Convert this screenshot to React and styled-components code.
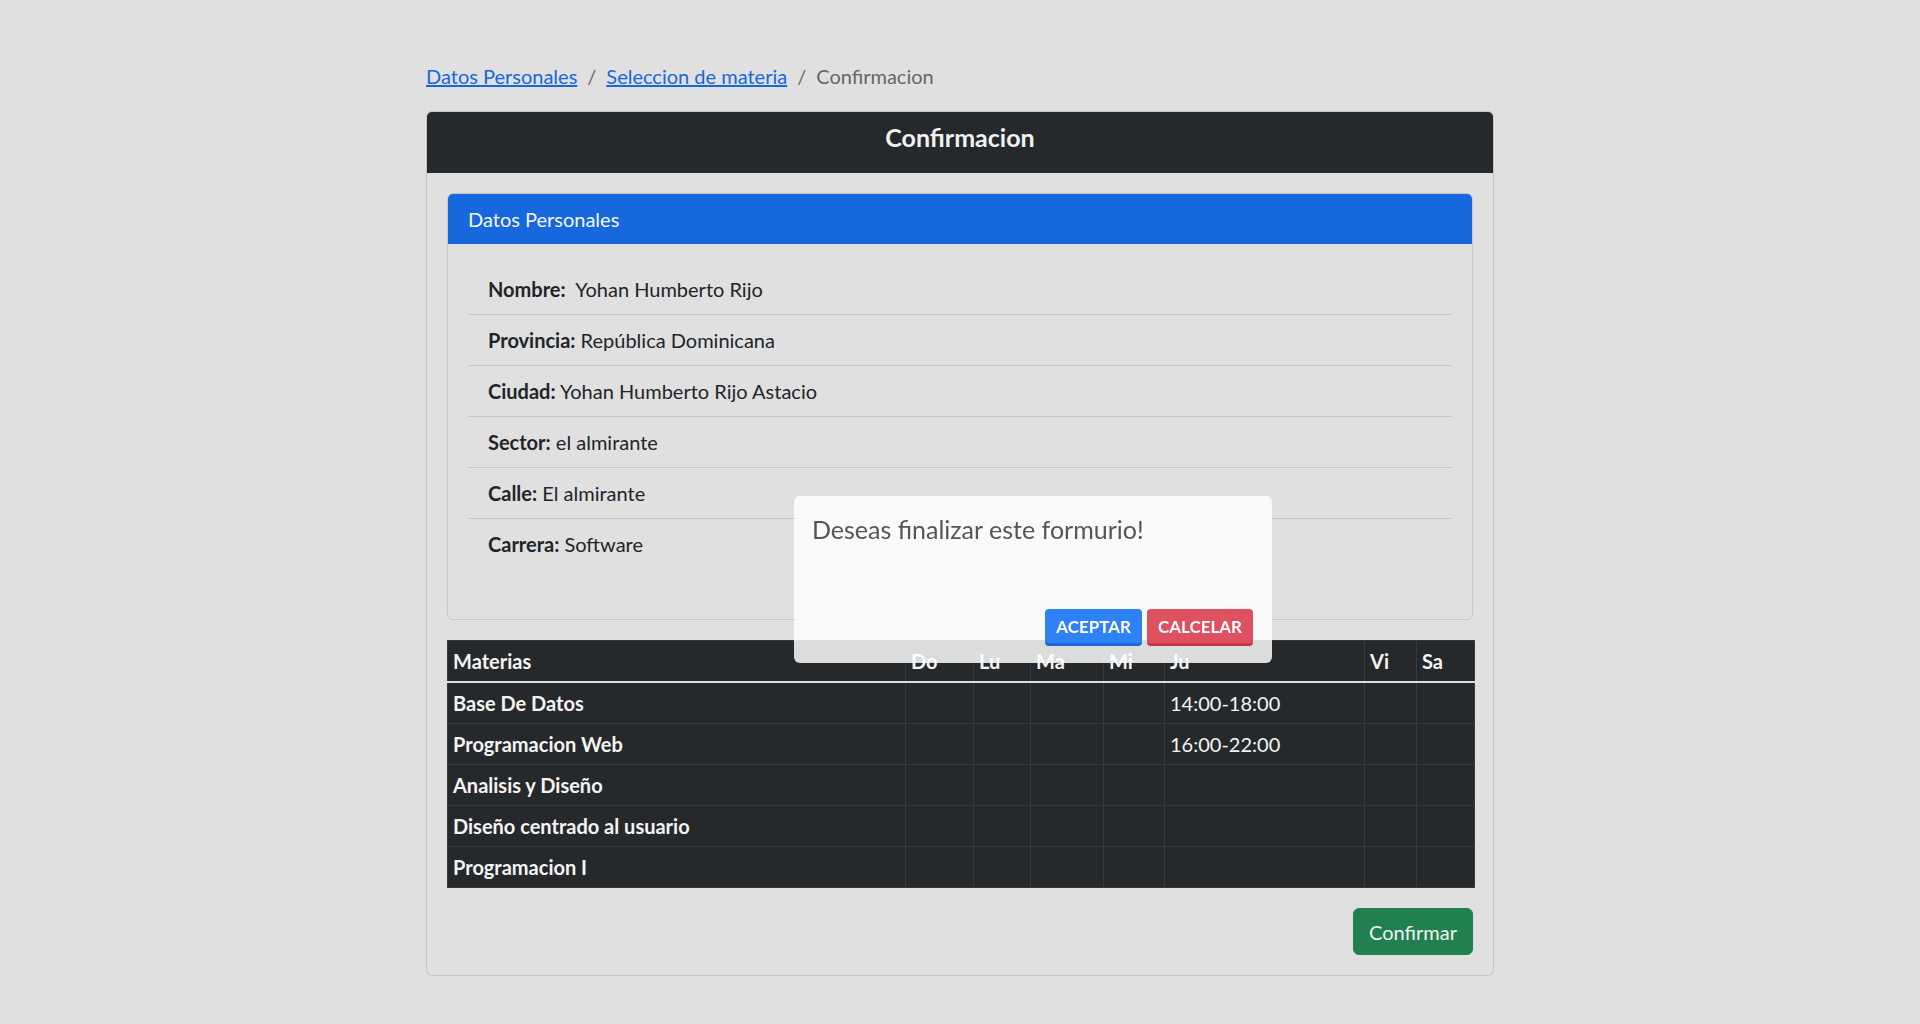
import React from 'react';
import styled, { createGlobalStyle } from 'styled-components';

const GlobalStyle = createGlobalStyle`
  body {
    margin: 0;
    background-color: #e0e0e0;
    font-family: Lato, 'Open Sans', sans-serif;
    color: #212529;
  }
`;

const Page = styled.div`
  width: 1068px;
  margin: 0 auto;
  padding-top: 61px;
  font-size: 20px;
  line-height: 30px;
`;

const Breadcrumb = styled.nav`
  display: flex;
  align-items: center;
  margin-bottom: 20px;
`;

const Crumb = styled.a`
  color: #1767dd;
  text-decoration: underline;
`;

const CrumbActive = styled.span`
  color: #62676c;
`;

const Divider = styled.span`
  color: #62676c;
  padding: 0 10px;
`;

const Card = styled.div`
  border: 1px solid #c6c6c6;
  border-radius: 6px;
  overflow: hidden;
`;

const DarkHeader = styled.div`
  background-color: #26292c;
  color: #f1f1f1;
  text-align: center;
  font-size: 25px;
  font-weight: 700;
  padding: 10px 20px 20px;
  line-height: 30px;
  border-bottom: 1px solid #26292c;
`;

const CardBody = styled.div`
  padding: 20px;
  display: flex;
  flex-direction: column;
`;

const InnerCard = styled.div`
  border: 1px solid #c6c6c6;
  border-radius: 6px;
  overflow: hidden;
`;

const BlueHeader = styled.div`
  background-color: #1767dd;
  color: #f4f7fc;
  padding: 10px 20px;
`;

const InnerBody = styled.div`
  padding: 20px 20px 50px;
`;

const List = styled.ul`
  list-style: none;
  margin: 0;
  padding: 0;
`;

const Item = styled.li`
  padding: 10px 20px;
  border-bottom: 1px solid #c6c6c6;
  &:last-child {
    border-bottom: none;
  }
`;

const Label = styled.b`
  font-weight: 700;
`;

const Table = styled.table`
  margin-top: 20px;
  margin-bottom: 20px;
  width: 100%;
  border-collapse: collapse;
  table-layout: fixed;
  background-color: #26292c;
  color: #f4f4f4;
`;

const Col = styled.col`
  width: ${(p) => p.w}px;
`;

const Th = styled.th`
  text-align: left;
  font-weight: 700;
  padding: 5px;
  border: 1px solid #373b3e;
  white-space: nowrap;
`;

const HeadRow = styled.tr`
  th {
    border-bottom: 2px solid #dedede;
  }
`;

const Td = styled.td`
  padding: 5px;
  border: 1px solid #373b3e;
`;

const Footer = styled.div`
  display: flex;
  justify-content: flex-end;
`;

const Button = styled.button`
  font-family: inherit;
  font-size: 20px;
  line-height: 30px;
  padding: 7.5px 15px;
  border: 1px solid #20804f;
  border-radius: 6px;
  background-color: #20804f;
  color: #f4f4f4;
`;

const Dialog = styled.div`
  position: fixed;
  left: 794px;
  top: 496px;
  width: 478px;
  height: 167px;
  box-sizing: border-box;
  padding: 18px 19px 17px 18px;
  border-radius: 6px;
  background-color: rgba(255, 255, 255, 0.84);
  display: flex;
  flex-direction: column;
`;

const DialogText = styled.div`
  font-size: 25px;
  line-height: 31px;
  color: #555;
`;

const DialogActions = styled.div`
  margin-top: auto;
  display: flex;
  justify-content: flex-end;
  gap: 5px;
`;

const DialogButton = styled.button`
  font-family: inherit;
  height: 37px;
  padding: 0 11px;
  font-size: 17px;
  font-weight: 700;
  text-transform: uppercase;
  color: #fff;
  border: none;
  border-radius: 4px;
  background-color: ${(p) => (p.danger ? '#de5161' : '#2f82f6')};
  border-bottom: 3px solid ${(p) => (p.danger ? '#c23a49' : '#1a66d8')};
`;

const personal = [
  ['Nombre:', '\u00a0 Yohan Humberto Rijo'],
  ['Provincia:', ' República Dominicana'],
  ['Ciudad:', ' Yohan Humberto Rijo Astacio'],
  ['Sector:', ' el almirante'],
  ['Calle:', ' El almirante'],
  ['Carrera:', ' Software'],
];

const columns = [
  ['Materias', 458],
  ['Do', 68],
  ['Lu', 57],
  ['Ma', 73],
  ['Mi', 61],
  ['Ju', 200],
  ['Vi', 52],
  ['Sa', 58],
];

const materias = [
  ['Base De Datos', '14:00-18:00'],
  ['Programacion Web', '16:00-22:00'],
  ['Analisis y Diseño', ''],
  ['Diseño centrado al usuario', ''],
  ['Programacion I', ''],
];

const App = () => {
  return (
    <>
      <GlobalStyle />
      <Page>
        <Breadcrumb>
          <Crumb href="#">Datos Personales</Crumb>
          <Divider>/</Divider>
          <Crumb href="#">Seleccion de materia</Crumb>
          <Divider>/</Divider>
          <CrumbActive>Confirmacion</CrumbActive>
        </Breadcrumb>

        <Card>
          <DarkHeader>Confirmacion</DarkHeader>
          <CardBody>
            <InnerCard>
              <BlueHeader>Datos Personales</BlueHeader>
              <InnerBody>
                <List>
                  {personal.map(([label, value]) => (
                    <Item key={label}>
                      <Label>{label}</Label>
                      {value}
                    </Item>
                  ))}
                </List>
              </InnerBody>
            </InnerCard>

            <Table>
              <colgroup>
                {columns.map(([name, w]) => (
                  <Col key={name} w={w} />
                ))}
              </colgroup>
              <thead>
                <HeadRow>
                  {columns.map(([name]) => (
                    <Th key={name}>{name}</Th>
                  ))}
                </HeadRow>
              </thead>
              <tbody>
                {materias.map(([name, ju]) => (
                  <tr key={name}>
                    <Th scope="row">{name}</Th>
                    <Td />
                    <Td />
                    <Td />
                    <Td />
                    <Td>{ju}</Td>
                    <Td />
                    <Td />
                  </tr>
                ))}
              </tbody>
            </Table>

            <Footer>
              <Button>Confirmar</Button>
            </Footer>
          </CardBody>
        </Card>
      </Page>

      <Dialog>
        <DialogText>Deseas finalizar este formurio!</DialogText>
        <DialogActions>
          <DialogButton>Aceptar</DialogButton>
          <DialogButton danger>Calcelar</DialogButton>
        </DialogActions>
      </Dialog>
    </>
  );
};

export default App;
